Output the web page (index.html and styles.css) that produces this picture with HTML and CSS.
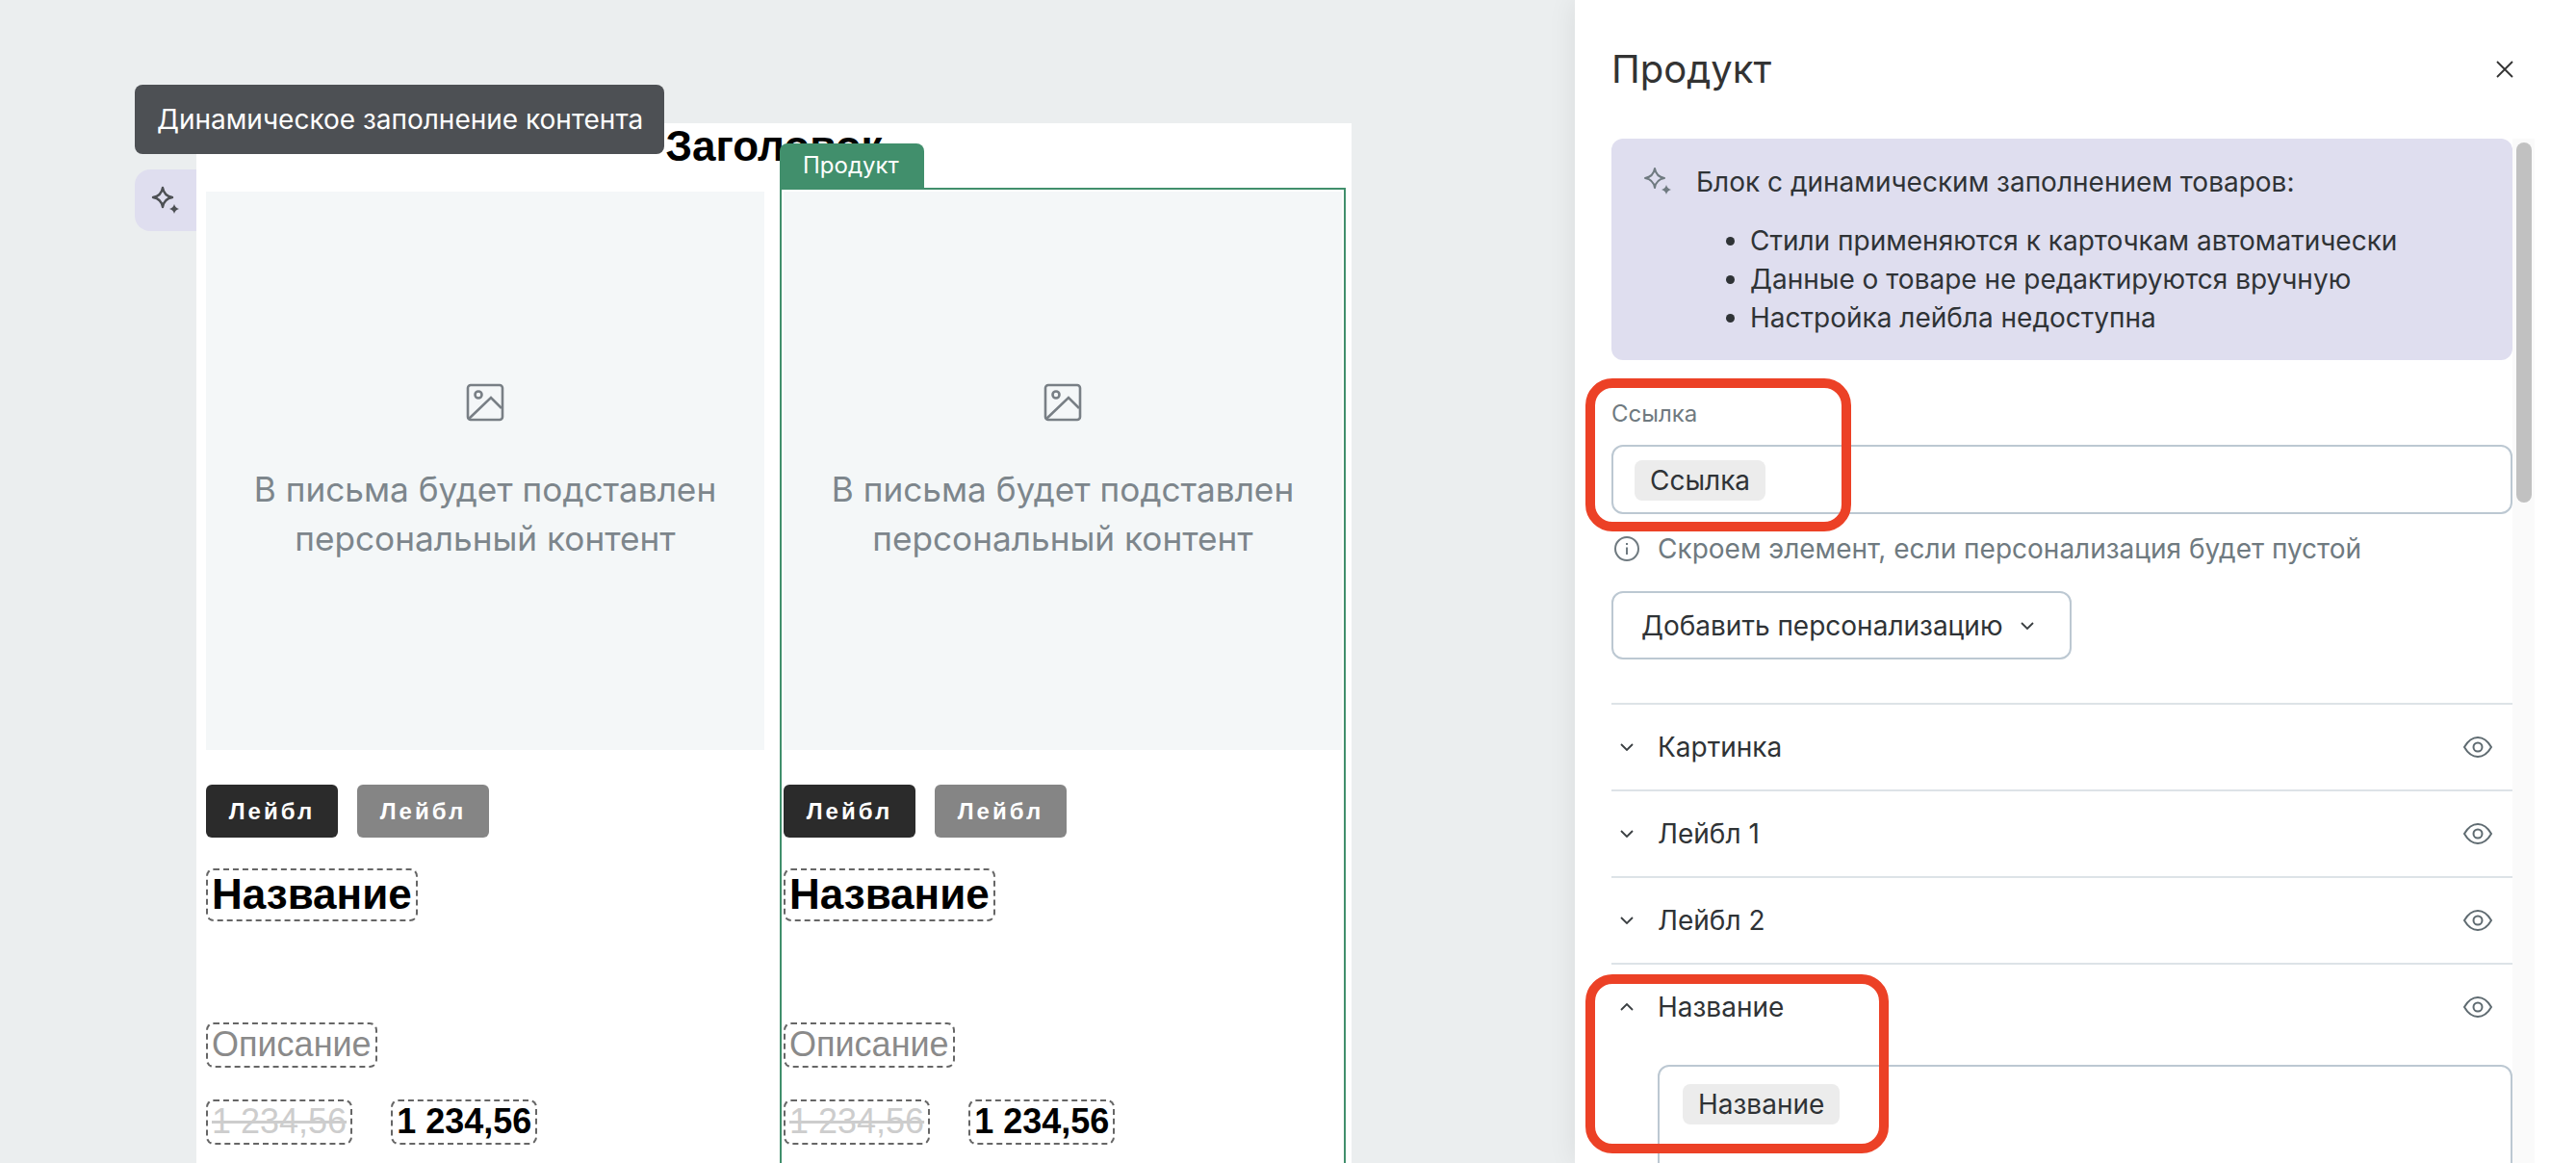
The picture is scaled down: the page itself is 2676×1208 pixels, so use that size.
FILE: index.html

```html
<!DOCTYPE html>
<html lang="en">
<head>
  <meta charset="UTF-8" />
  <title>Продукт</title>
  <link rel="stylesheet" href="styles.css">
</head>
<body>
  <div class="app">

    <!-- Editor canvas -->
    <div class="stage">
      <div class="tooltip">Динамическое заполнение контента</div>
      <div class="side-btn">
        <svg class="sparkle" width="32" height="32" viewBox="0 0 32 32">
          <path class="sparkle-big" d="M13 3C14 9 17 12 23 13C17 14 14 17 13 23C12 17 9 14 3 13C9 12 12 9 13 3Z"/>
          <path class="sparkle-small" d="M25 20Q26 24 30 25Q26 26 25 30Q24 26 20 25Q24 24 25 20Z"/>
        </svg>
      </div>
      <div class="canvas">
        <h1 class="canvas-title">Заголовок</h1>
        <div class="products">
          <div class="product">
            <div class="placeholder">
              <svg class="pic" width="40" height="40" viewBox="0 0 40 40">
                <rect x="2" y="2" width="36" height="36" rx="3"/>
                <circle cx="13" cy="12" r="3.5"/>
                <path d="M3 37L26 15L37 26"/>
              </svg>
              <p>В письма будет подставлен<br>персональный контент</p>
            </div>
            <div class="labels">
              <span class="label label-dark">Лейбл</span>
              <span class="label label-gray">Лейбл</span>
            </div>
            <div class="name"><span class="dashed">Название</span></div>
            <div class="desc"><span class="dashed">Описание</span></div>
            <div class="prices">
              <span class="dashed price-old"><s>1 234,56</s></span>
              <span class="dashed price-new">1 234,56</span>
            </div>
          </div>
          <div class="product product-active">
            <div class="product-tab">Продукт</div>
            <div class="placeholder">
              <svg class="pic" width="40" height="40" viewBox="0 0 40 40">
                <rect x="2" y="2" width="36" height="36" rx="3"/>
                <circle cx="13" cy="12" r="3.5"/>
                <path d="M3 37L26 15L37 26"/>
              </svg>
              <p>В письма будет подставлен<br>персональный контент</p>
            </div>
            <div class="labels">
              <span class="label label-dark">Лейбл</span>
              <span class="label label-gray">Лейбл</span>
            </div>
            <div class="name"><span class="dashed">Название</span></div>
            <div class="desc"><span class="dashed">Описание</span></div>
            <div class="prices">
              <span class="dashed price-old"><s>1 234,56</s></span>
              <span class="dashed price-new">1 234,56</span>
            </div>
          </div>
        </div>
      </div>
    </div>

    <!-- Settings panel -->
    <div class="panel">
      <div class="panel-head">
        <h2>Продукт</h2>
        <svg class="close" width="18" height="18" viewBox="0 0 18 18"><path d="M1 1L17 17M17 1L1 17"/></svg>
      </div>
      <div class="panel-body">
        <div class="panel-content">
          <div class="info">
            <svg class="sparkle sparkle-info" width="32" height="32" viewBox="0 0 32 32">
              <path class="sparkle-big" d="M13 3C14 9 17 12 23 13C17 14 14 17 13 23C12 17 9 14 3 13C9 12 12 9 13 3Z"/>
              <path class="sparkle-small" d="M25 20Q26 24 30 25Q26 26 25 30Q24 26 20 25Q24 24 25 20Z"/>
            </svg>
            <div>
              <div class="info-title">Блок с динамическим заполнением товаров:</div>
              <ul>
                <li>Стили применяются к карточкам автоматически</li>
                <li>Данные о товаре не редактируются вручную</li>
                <li>Настройка лейбла недоступна</li>
              </ul>
            </div>
          </div>

          <div class="field-label">Ссылка</div>
          <div class="input"><span class="chip">Ссылка</span></div>
          <div class="hint">
            <svg width="28" height="28" viewBox="0 0 28 28" class="hint-icon">
              <circle cx="14" cy="14" r="12"/>
              <path d="M14 12.5V20M14 8V10"/>
            </svg>
            Скроем элемент, если персонализация будет пустой
          </div>
          <button class="add-btn">Добавить персонализацию
            <svg class="chev" width="14" height="8" viewBox="0 0 14 8"><path d="M1 1L7 7L13 1"/></svg>
          </button>

          <div class="section">
            <svg class="chev" width="14" height="8" viewBox="0 0 14 8"><path d="M1 1L7 7L13 1"/></svg>
            <span>Картинка</span>
            <svg class="eye" width="30" height="22" viewBox="0 0 30 22"><path d="M1 11C5 4 10 1 15 1C20 1 25 4 29 11C25 18 20 21 15 21C10 21 5 18 1 11Z"/><circle cx="15" cy="11" r="4.5"/></svg>
          </div>
          <div class="section">
            <svg class="chev" width="14" height="8" viewBox="0 0 14 8"><path d="M1 1L7 7L13 1"/></svg>
            <span>Лейбл 1</span>
            <svg class="eye" width="30" height="22" viewBox="0 0 30 22"><path d="M1 11C5 4 10 1 15 1C20 1 25 4 29 11C25 18 20 21 15 21C10 21 5 18 1 11Z"/><circle cx="15" cy="11" r="4.5"/></svg>
          </div>
          <div class="section">
            <svg class="chev" width="14" height="8" viewBox="0 0 14 8"><path d="M1 1L7 7L13 1"/></svg>
            <span>Лейбл 2</span>
            <svg class="eye" width="30" height="22" viewBox="0 0 30 22"><path d="M1 11C5 4 10 1 15 1C20 1 25 4 29 11C25 18 20 21 15 21C10 21 5 18 1 11Z"/><circle cx="15" cy="11" r="4.5"/></svg>
          </div>
          <div class="section section-open">
            <svg class="chev" width="14" height="8" viewBox="0 0 14 8"><path d="M1 7L7 1L13 7"/></svg>
            <span>Название</span>
            <svg class="eye" width="30" height="22" viewBox="0 0 30 22"><path d="M1 11C5 4 10 1 15 1C20 1 25 4 29 11C25 18 20 21 15 21C10 21 5 18 1 11Z"/><circle cx="15" cy="11" r="4.5"/></svg>
          </div>
          <div class="input input-name"><span class="chip">Название</span></div>
        </div>
        <div class="scrollbar"><div class="scroll-thumb"></div></div>
      </div>

      <!-- Red annotation frames -->
      <div class="mark mark-link"></div>
      <div class="mark mark-name"></div>
    </div>

  </div>
</body>
</html>
```

FILE: styles.css

```css
html, body {
  margin: 0;
  padding: 0;
}
body {
  background: #ebeeef;
  font-family: 'Inter', sans-serif;
}
.app {
  display: flex;
  height: 1208px;
  overflow: hidden;
}

/* stage */
.stage {
  position: relative;
  flex: 1;
  display: flex;
  align-items: flex-start;
  padding: 128px 0 0 140px;
  overflow: hidden;
}
.tooltip {
  position: absolute;
  left: 140px;
  top: 88px;
  z-index: 5;
  height: 72px;
  width: 550px;
  box-sizing: border-box;
  padding-left: 23px;
  line-height: 72px;
  font-size: 28px;
  color: #fff;
  background: #4d5054;
  border-radius: 8px;
}
.side-btn {
  width: 64px;
  height: 64px;
  margin-top: 48px;
  padding: 16px 0 0 16px;
  box-sizing: border-box;
  background: #dfdeef;
  border-radius: 16px 0 0 16px;
}
.sparkle {
  display: block;
}
.sparkle-big {
  fill: none;
  stroke: #4d5054;
  stroke-width: 2.4;
  stroke-linejoin: round;
}
.sparkle-small {
  fill: #4d5054;
}
.canvas {
  width: 1200px;
  height: 1080px;
  background: #fff;
  font-family: 'Liberation Sans', Arial, sans-serif;
}
.canvas-title {
  margin: 0;
  height: 71px;
  line-height: 47px;
  font-size: 44px;
  font-weight: bold;
  text-align: center;
  color: #000;
}
.products {
  display: flex;
}
.product {
  position: relative;
  width: 600px;
  box-sizing: border-box;
  padding: 0 10px;
}
.product-active::before {
  content: "";
  position: absolute;
  left: 6px;
  top: -4px;
  width: 588px;
  height: 1100px;
  border: 2px solid #418f6c;
  border-bottom: none;
  box-sizing: border-box;
  pointer-events: none;
}
.product-tab {
  position: absolute;
  left: 6px;
  top: -50px;
  width: 150px;
  height: 46px;
  box-sizing: border-box;
  padding-left: 24px;
  line-height: 46px;
  font-family: 'Inter', sans-serif;
  font-size: 24px;
  color: #fff;
  background: #418f6c;
  border-radius: 8px 8px 0 0;
}
.placeholder {
  height: 580px;
  background: #f4f7f8;
  display: flex;
  flex-direction: column;
  align-items: center;
  color: #7d868c;
}
.placeholder p {
  margin: 45px 0 0;
  font-family: 'Inter', sans-serif;
  font-size: 35.2px;
  line-height: 51px;
  text-align: center;
}
.pic {
  margin-top: 199px;
  fill: none;
  stroke: #787f85;
  stroke-width: 2.6;
}
.labels {
  display: flex;
  gap: 20px;
  margin-top: 36px;
}
.label {
  width: 137px;
  height: 55px;
  line-height: 55px;
  text-align: center;
  font-size: 24px;
  font-weight: bold;
  letter-spacing: 3px;
  color: #fff;
  border-radius: 6px;
}
.label-dark {
  background: #2b2b2b;
}
.label-gray {
  background: #858585;
}
.dashed {
  display: inline-block;
  border: 2px dashed #666;
  border-radius: 8px;
  padding: 0 4px;
  box-sizing: border-box;
}
.name {
  margin-top: 32px;
  height: 55px;
  font-size: 44px;
  font-weight: bold;
  color: #000;
}
.name .dashed {
  height: 55px;
  line-height: 49px;
}
.desc {
  margin-top: 105px;
  height: 47px;
  font-size: 36px;
  color: #8a8a8a;
}
.desc .dashed,
.prices .dashed {
  height: 47px;
  line-height: 41px;
}
.prices {
  display: flex;
  gap: 40px;
  margin-top: 33px;
  font-size: 36px;
}
.price-old {
  color: #cdcdcd;
}
.price-new {
  font-weight: bold;
  color: #000;
}

/* panel */
.panel {
  position: relative;
  z-index: 6;
  width: 1040px;
  flex-shrink: 0;
  box-sizing: border-box;
  background: #fff;
  padding-left: 38px;
  color: #2f3336;
  box-shadow: 0 0 28px rgba(0, 0, 0, 0.08);
}
.panel-head {
  display: flex;
  align-items: center;
  justify-content: space-between;
  width: 936px;
  height: 144px;
}
.panel-head h2 {
  margin: 0;
  font-size: 40px;
  font-weight: 400;
  line-height: 144px;
  color: #333;
}
.close {
  margin-right: -1px;
  fill: none;
  stroke: #333;
  stroke-width: 1.8;
}
.panel-body {
  display: flex;
  align-items: flex-start;
}
.panel-content {
  width: 936px;
  font-size: 28px;
}
.scrollbar {
  width: 23px;
  height: 1064px;
  flex-shrink: 0;
  background: #fafafa;
  padding: 4px 4px 0;
  box-sizing: border-box;
}
.scroll-thumb {
  width: 16px;
  height: 374px;
  background: #c1c1c1;
  border-radius: 8px;
}
.info {
  display: flex;
  height: 230px;
  box-sizing: border-box;
  padding: 28px 0 0 32px;
  background: #dfdeef;
  border-radius: 12px;
}
.sparkle-info {
  flex-shrink: 0;
  margin-right: 24px;
}
.sparkle-info .sparkle-big {
  stroke: #6f7a80;
  stroke-width: 2;
}
.sparkle-info .sparkle-small {
  fill: #6f7a80;
}
.info-title {
  line-height: 34px;
}
.info ul {
  margin: 24px 0 0;
  padding-left: 56px;
}
.info li {
  line-height: 40px;
}
.field-label {
  margin-top: 40px;
  height: 32px;
  line-height: 32px;
  font-size: 24px;
  color: #6f7a80;
}
.input {
  height: 72px;
  margin-top: 16px;
  box-sizing: border-box;
  padding: 14px 22px;
  border: 2px solid #bcc8d2;
  border-radius: 12px;
  background: #fff;
}
.chip {
  display: inline-block;
  height: 42px;
  line-height: 42px;
  padding: 0 16px;
  background: #ececec;
  border-radius: 8px;
}
.hint {
  display: flex;
  align-items: center;
  gap: 18px;
  margin-top: 22px;
  height: 28px;
  padding-left: 2px;
  font-size: 28px;
  color: #6f7a80;
}
.hint-icon {
  fill: none;
  stroke: #6f7a80;
  stroke-width: 2;
}
.add-btn {
  display: flex;
  align-items: center;
  gap: 18px;
  margin-top: 30px;
  width: 478px;
  height: 71px;
  padding: 0 0 0 29px;
  background: #fff;
  border: 2px solid #bcc8d2;
  border-radius: 12px;
  font: inherit;
  color: inherit;
}
.chev {
  flex-shrink: 0;
  fill: none;
  stroke: #3a3f42;
  stroke-width: 1.8;
}
.section {
  display: flex;
  align-items: center;
  height: 88px;
  padding: 0 21px 0 9px;
  border-top: 2px solid #dde3e7;
}
.add-btn + .section {
  margin-top: 45px;
}
.section span {
  flex: 1;
  margin-left: 25px;
}
.eye {
  fill: none;
  stroke: #5f6b71;
  stroke-width: 2;
}
.input-name {
  height: 140px;
  margin: 16px 0 0 48px;
  padding: 18px 24px;
}

/* annotation frames */
.mark {
  position: absolute;
  z-index: 4;
  box-sizing: border-box;
  border: 10px solid #ec4126;
  border-radius: 28px;
}
.mark-link {
  left: 11px;
  top: 393px;
  width: 276px;
  height: 159px;
}
.mark-name {
  left: 11px;
  top: 1012px;
  width: 315px;
  height: 186px;
}
```
